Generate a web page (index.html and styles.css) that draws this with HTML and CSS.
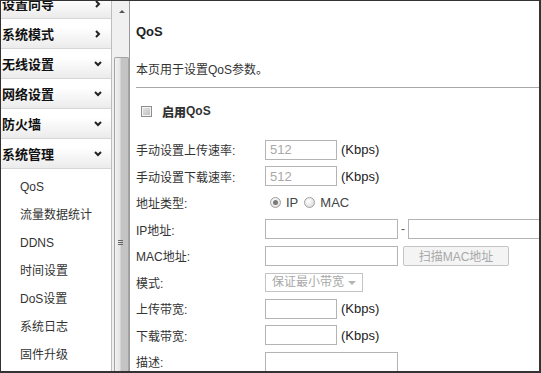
FILE: index.html
```html
<!doctype html>
<html lang="zh-CN">
  <head>
    <meta charset="UTF-8" />
    <meta name="viewport" content="width=device-width, initial-scale=1.0" />
    <title>QoS</title>
    <link rel="stylesheet" href="styles.css">
  </head>
  <body>
    <div class="frame">
      <aside class="nav">
        <ul class="menu">
          <li class="menu-head">设置向导<svg class="chev" viewBox="0 0 8 8"><polyline points="2,1 5,4 2,7" /></svg></li>
          <li class="menu-head">系统模式<svg class="chev" viewBox="0 0 8 8"><polyline points="2,1 5,4 2,7" /></svg></li>
          <li class="menu-head">无线设置<svg class="chev" viewBox="0 0 8 8"><polyline points="1,2 4,5 7,2" /></svg></li>
          <li class="menu-head">网络设置<svg class="chev" viewBox="0 0 8 8"><polyline points="1,2 4,5 7,2" /></svg></li>
          <li class="menu-head">防火墙<svg class="chev" viewBox="0 0 8 8"><polyline points="1,2 4,5 7,2" /></svg></li>
          <li class="menu-head">系统管理<svg class="chev" viewBox="0 0 8 8"><polyline points="1,2 4,5 7,2" /></svg></li>
        </ul>
        <ul class="submenu">
          <li>QoS</li>
          <li>流量数据统计</li>
          <li>DDNS</li>
          <li>时间设置</li>
          <li>DoS设置</li>
          <li>系统日志</li>
          <li>固件升级</li>
        </ul>
      </aside>

      <div class="scrollbar">
        <span class="arrow-up"></span>
        <div class="thumb"><span class="grip"></span></div>
      </div>

      <main class="content">
        <h2 class="title">QoS</h2>
        <p class="desc">本页用于设置QoS参数。</p>
        <hr class="rule" />
        <label class="enable"><span class="checkbox"></span><b>启用</b>QoS</label>

        <div class="form">
          <div class="row">
            <span class="label">手动设置上传速率:</span>
            <input class="field short muted" type="text" value="512" />
            <span class="unit">(Kbps)</span>
          </div>
          <div class="row alt">
            <span class="label">手动设置下载速率:</span>
            <input class="field short muted" type="text" value="512" />
            <span class="unit">(Kbps)</span>
          </div>
          <div class="row">
            <span class="label">地址类型:</span>
            <span class="radio checked"></span><span class="opt">IP</span>
            <span class="radio"></span><span class="opt">MAC</span>
          </div>
          <div class="row alt">
            <span class="label">IP地址:</span>
            <input class="field long" type="text" />
            <span class="dash">-</span>
            <input class="field long" type="text" />
          </div>
          <div class="row">
            <span class="label">MAC地址:</span>
            <input class="field long" type="text" />
            <button class="scan" type="button">扫描MAC地址</button>
          </div>
          <div class="row alt">
            <span class="label">模式:</span>
            <div class="select">保证最小带宽<span class="caret"></span></div>
          </div>
          <div class="row">
            <span class="label">上传带宽:</span>
            <input class="field short" type="text" />
            <span class="unit">(Kbps)</span>
          </div>
          <div class="row alt">
            <span class="label">下载带宽:</span>
            <input class="field short" type="text" />
            <span class="unit">(Kbps)</span>
          </div>
          <div class="row">
            <span class="label">描述:</span>
            <input class="field long" type="text" />
          </div>
        </div>
      </main>
    </div>
  </body>
</html>
```

FILE: styles.css
```css
:root {
  --frame-color: #333333;
  --text-color: #333333;
  --line-color: #d6d6d6;
  --field-border: #b4b4b4;
  --muted: #a8a8a8;
}

body {
  margin: 0;
  font-family: "Liberation Sans", "Noto Sans CJK SC", sans-serif;
  color: var(--text-color);
  background: #ffffff;
}

.frame {
  display: flex;
  width: 541px;
  height: 373px;
  box-sizing: border-box;
  border-top: 1px solid var(--frame-color);
  border-left: 1px solid var(--frame-color);
  border-right: 2px solid var(--frame-color);
  border-bottom: 2px solid var(--frame-color);
  overflow: hidden;
}

/* left menu */

.nav {
  width: 110px;
  flex-shrink: 0;
  border-right: 1px solid #bdbdbd;
  overflow: hidden;
}

.menu,
.submenu {
  list-style: none;
  margin: 0;
  padding: 0;
}

.menu {
  margin-top: -12px;
}

.menu-head {
  display: flex;
  align-items: center;
  justify-content: space-between;
  height: 29px;
  padding: 0 9px 0 1px;
  border-bottom: 1px solid var(--line-color);
  background: linear-gradient(#ffffff 30%, #ebebeb);
  font-size: 13px;
  font-weight: bold;
  color: #111111;
}

.chev {
  width: 8px;
  height: 8px;
}

.chev polyline {
  fill: none;
  stroke: #222222;
  stroke-width: 2;
}

.submenu {
  padding-top: 4px;
}

.submenu li {
  height: 28px;
  line-height: 28px;
  padding-left: 19px;
  font-size: 12px;
  color: #333333;
}

/* fake scrollbar between menu and page */

.scrollbar {
  position: relative;
  width: 17px;
  flex-shrink: 0;
  background: #f0f0f0;
  border-right: 1px solid #9a9a9a;
}

.arrow-up {
  position: absolute;
  top: 9px;
  left: 7px;
  border-left: 3px solid transparent;
  border-right: 3px solid transparent;
  border-bottom: 3px solid #555555;
}

.thumb {
  position: absolute;
  top: 56px;
  left: 2px;
  right: 0;
  bottom: 0;
  box-sizing: border-box;
  border: 1px solid #a4a4a4;
  border-bottom: none;
  border-radius: 2px 2px 0 0;
  background: linear-gradient(to right, #f2f2f2 0, #e4e4e4 40%, #c4c4c4 45%, #c4c4c4 100%);
}

.grip {
  position: absolute;
  top: 182px;
  left: 3px;
  width: 5px;
  height: 6px;
  background: repeating-linear-gradient(#666666 0 1px, transparent 1px 2px);
}

/* page body */

.content {
  flex: 1;
  padding-left: 6px;
  font-size: 12px;
}

.title {
  margin: 0;
  padding-top: 23px;
  line-height: 16px;
  font-size: 13px;
  font-weight: bold;
  color: #222222;
}

.desc {
  margin: 22px 0 0;
  line-height: 16px;
}

.rule {
  margin: 9px 0 0;
  border: none;
  border-top: 1px solid #a8a8a8;
}

.enable {
  display: flex;
  align-items: center;
  margin-top: 15px;
  height: 16px;
  font-size: 12px;
  font-weight: bold;
}

.enable b {
  margin-left: 10px;
}

.checkbox {
  width: 9px;
  height: 9px;
  margin-left: 5px;
  border: 1px solid #8e8e8e;
  background: linear-gradient(135deg, #e6e6e6, #bdbdbd);
  box-shadow: inset 0 0 0 1px #f4f4f4;
}

.form {
  margin-top: 17px;
}

.row {
  display: flex;
  align-items: center;
  height: 27px;
}

.row.alt {
  height: 26px;
}

.label {
  width: 129px;
  flex-shrink: 0;
}

.field {
  height: 20px;
  box-sizing: border-box;
  margin: 0;
  padding: 0 4px;
  border: 1px solid var(--field-border);
  font-family: inherit;
  font-size: 13px;
  color: var(--text-color);
  background: #ffffff;
}

.field.short {
  width: 72px;
}

.field.long {
  width: 133px;
}

.field.muted {
  color: var(--muted);
}

.unit {
  margin-left: 4px;
  font-size: 13px;
  color: #222222;
}

.dash {
  width: 10px;
  text-align: center;
  color: #555555;
}

.radio {
  position: relative;
  width: 9px;
  height: 9px;
  margin-left: 5px;
  border: 1px solid #a0a0a0;
  border-radius: 50%;
  background: radial-gradient(circle at 40% 35%, #ffffff, #d6d6d6);
}

.radio.checked::after {
  content: "";
  position: absolute;
  top: 2px;
  left: 2px;
  width: 5px;
  height: 5px;
  border-radius: 50%;
  background: #7a7a7a;
}

.opt {
  margin-left: 5px;
  margin-right: 1px;
  font-size: 13px;
  color: #444444;
}

.scan {
  width: 106px;
  height: 20px;
  margin-left: 5px;
  padding: 0;
  border: 1px solid #c4c4c4;
  border-radius: 2px;
  background: #f4f4f4;
  font-family: inherit;
  font-size: 12px;
  color: var(--muted);
}

.select {
  position: relative;
  width: 98px;
  height: 19px;
  box-sizing: border-box;
  padding-left: 6px;
  line-height: 17px;
  border: 1px solid #c4c4c4;
  color: var(--muted);
}

.caret {
  position: absolute;
  top: 7px;
  right: 6px;
  border-left: 4px solid transparent;
  border-right: 4px solid transparent;
  border-top: 4px solid #b4b4b4;
}
```
